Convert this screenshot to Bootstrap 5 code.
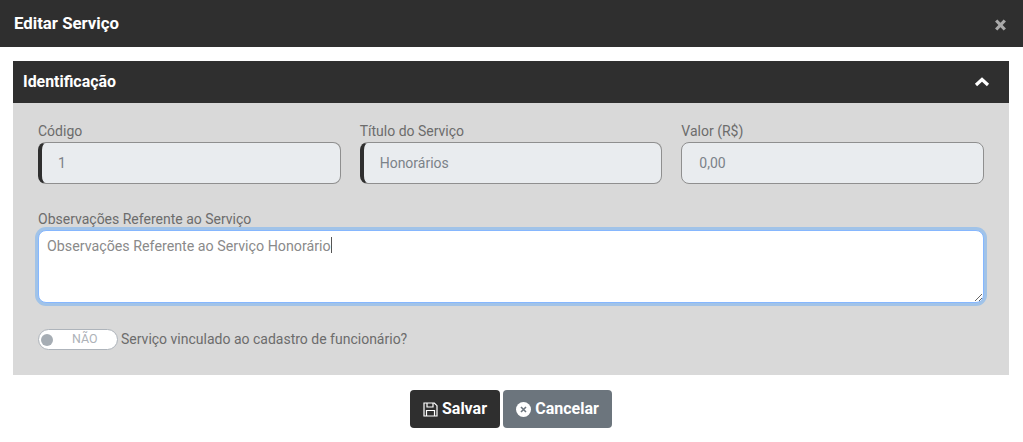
<!DOCTYPE html>
<html lang="pt-BR">
<head>
<meta charset="UTF-8">
<title>Editar Serviço</title>
<link href="https://cdn.jsdelivr.net/npm/bootstrap@5.3.1/dist/css/bootstrap.min.css" rel="stylesheet">
<style>
    html, body { height: 100%; overflow: hidden; }
    body { font-family: Roboto, "Liberation Sans", sans-serif; background: #fff; font-size: 14px; color: #6c6c6c; }
    .modal-top { height: 47px; background: #2f2f2f; color: #fff; padding: 0 17px 0 14px; }
    .modal-top h1 { font-size: 16.8px; font-weight: 700; margin: 0; }
    .close-x { color: #a9a9a9; line-height: 0; margin-top: 3px; }
    .sheet { margin: 14px 14px 0 13px; }
    .sheet-head { height: 42px; background: #2f2f2f; color: #fff; padding: 0 19px 0 10px; }
    .sheet-head h2 { font-size: 15.9px; font-weight: 700; margin: 0; }
    .sheet-body { background: #d9d9d9; height: 272px; padding: 19px 25px 0; }
    .sheet-row { --bs-gutter-x: 19px; --bs-gutter-y: 0; }
    .sheet-body label { display: block; font-size: 14px; line-height: 18px; color: #6c6c6c; margin-bottom: 2px; }
    .field-box.form-control { height: 42px; background: #e9ecef; border: 1px solid #8f8f8f; border-radius: 8px; font-size: 14px; color: #7b8289; padding: 0 17px; opacity: 1; }
    .field-box.req { border-left: 4px solid #2f2f2f; padding-left: 16px; }
    .obs-wrap { margin-top: 26px; position: relative; }
    .obs-box.form-control, .obs-box.form-control:focus { display: block; height: 73px; border: 1px solid #86b7fe; border-radius: 8px; box-shadow: 0 0 0 3px #a1c3e8; font-size: 14.25px; line-height: 21px; color: #8a8a8a; padding: 5px 8px; caret-color: transparent; background: #fff; }
    .obs-caret { position: absolute; left: 293px; top: 27px; width: 1px; height: 16px; background: #555; }
    .toggle-row { margin-top: 26px; gap: 3px; }
    .toggle-pill { width: 80px; height: 21px; border: 1px solid #aeb4bb; border-radius: 11px; background: #fff; font-size: 12.4px; color: #adb2b8; padding-left: 2px; }
    .toggle-pill i { display: block; width: 12px; height: 12px; border-radius: 50%; background: #a6adb4; margin-right: 19px; }
    .sheet-foot { padding-top: 15px; gap: 3px; margin-right: 1px; }
    .foot-btn.btn { height: 38px; font-size: 16px; font-weight: 700; color: #fff; border: 0; border-radius: 4px; padding: 0; gap: 4px; }
    .foot-save.btn { width: 90px; background: #2f2f2f; }
    .foot-cancel.btn { width: 109px; background: #6c757d; }
</style>
</head>
<body>
    <div class="modal-top d-flex align-items-center justify-content-between">
        <h1>Editar Serviço</h1>
        <span class="close-x">
            <svg width="11" height="12" viewBox="0 0 11 12"><path d="M1.2 1.5l8.6 9M9.8 1.5l-8.6 9" stroke="currentColor" stroke-width="3.2" fill="none"/></svg>
        </span>
    </div>

    <div class="sheet">
        <div class="sheet-head d-flex align-items-center justify-content-between">
            <h2>Identificação</h2>
            <svg width="16" height="10" viewBox="0 0 16 10"><path d="M2 8l6-5.5L14 8" stroke="#fff" stroke-width="3.2" fill="none"/></svg>
        </div>
        <div class="sheet-body">
            <div class="row sheet-row">
                <div class="col-4">
                    <label for="codigo">Código</label>
                    <input id="codigo" class="form-control field-box req" value="1" disabled>
                </div>
                <div class="col-4">
                    <label for="titulo">Título do Serviço</label>
                    <input id="titulo" class="form-control field-box req" value="Honorários" disabled>
                </div>
                <div class="col-4">
                    <label for="valor">Valor (R$)</label>
                    <input id="valor" class="form-control field-box" value="0,00" disabled>
                </div>
            </div>
            <div class="obs-wrap">
                <label for="obs">Observações Referente ao Serviço</label>
                <textarea id="obs" class="form-control obs-box">Observações Referente ao Serviço Honorário</textarea>
                <span class="obs-caret"></span>
            </div>
            <div class="toggle-row d-flex align-items-center">
                <div class="toggle-pill d-flex align-items-center"><i></i><span>NÃO</span></div>
                <span>Serviço vinculado ao cadastro de funcionário?</span>
            </div>
        </div>
    </div>

    <div class="sheet-foot d-flex justify-content-center">
        <button type="button" class="btn foot-btn foot-save d-flex align-items-center justify-content-center">
            <svg width="15" height="15" viewBox="0 0 15 15" fill="none" stroke="#fff" stroke-width="1.2"><path d="M1 1h10.3L14 3.7V14H1z"/><path d="M4 1v4h6V1M3.5 14V8.5h8V14"/></svg>
            Salvar
        </button>
        <button type="button" class="btn foot-btn foot-cancel d-flex align-items-center justify-content-center">
            <svg width="15" height="15" viewBox="0 0 15 15"><circle cx="7.5" cy="7.5" r="7.5" fill="#fff"/><path d="M5 5l5 5M10 5l-5 5" stroke="#6c757d" stroke-width="1.6"/></svg>
            Cancelar
        </button>
    </div>
    <script src="https://cdn.jsdelivr.net/npm/bootstrap@5.3.1/dist/js/bootstrap.bundle.min.js"></script>
    <script>
        document.getElementById('obs').focus();
    </script>
</body>
</html>
